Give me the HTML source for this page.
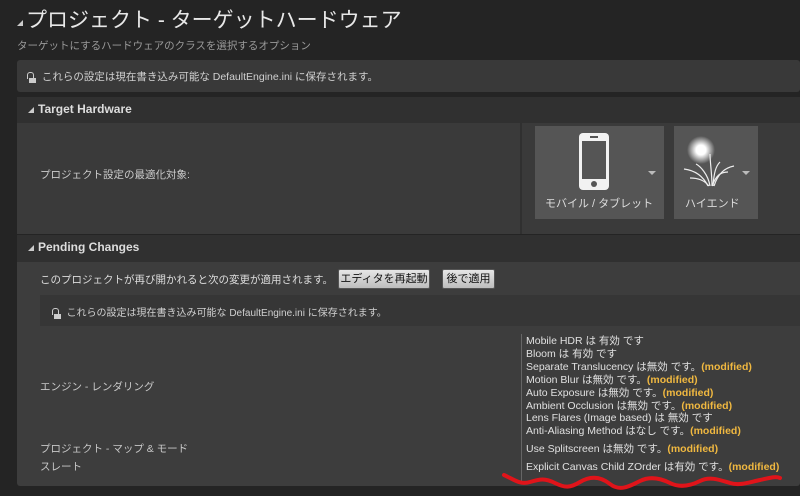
<!DOCTYPE html>
<html><head><meta charset="utf-8"><style>
*{margin:0;padding:0;box-sizing:border-box}
body{width:800px;height:496px;background:#242424;font-family:"Liberation Sans","Noto Sans CJK JP",sans-serif;color:#c8c8c8;position:relative;overflow:hidden;font-size:10.5px}
.a{position:absolute}
.lock{display:inline-block;width:9px;height:11px;position:relative;vertical-align:middle}
.lock:before{content:"";position:absolute;left:0;top:0;width:5px;height:6px;border:1.5px solid #ccc;border-bottom:none;border-radius:3px 3px 0 0}
.lock:after{content:"";position:absolute;left:2px;top:6px;width:7px;height:5px;background:#ccc}
.btn{position:absolute;height:20px;background:linear-gradient(#e6e6e6,#bdbdbd);border:1px solid #555;border-radius:2px;color:#111;font-size:11px;line-height:18px;text-align:center}
.m{color:#f0b840;font-weight:bold}
.tri{display:inline-block;width:0;height:0;border-left:6px solid transparent;border-bottom:6px solid #ccc;margin-right:4px}
.dd{position:absolute;width:0;height:0;border-left:4px solid transparent;border-right:4px solid transparent;border-top:4px solid #bbb}
</style></head><body>
<div class="a" style="left:17px;top:20px;width:0;height:0;border-left:6px solid transparent;border-bottom:6px solid #ccc"></div>
<div class="a" style="left:26px;top:4px;font-size:21px;color:#e8e8e8">プロジェクト - ターゲットハードウェア</div>
<div class="a" style="left:17px;top:38px;font-size:10.5px;color:#9a9a9a">ターゲットにするハードウェアのクラスを選択するオプション</div>
<div class="a" style="left:17px;top:60px;width:783px;height:32px;background:#393939;border-radius:3px"></div>
<div class="a" style="left:27px;top:69px;font-size:10.5px;color:#d0d0d0"><span class="lock"></span>&nbsp; これらの設定は現在書き込み可能な DefaultEngine.ini に保存されます。</div>
<div class="a" style="left:17px;top:97px;width:783px;height:26px;background:#303030"></div>
<div class="a" style="left:28px;top:102px;font-size:12px;font-weight:bold;color:#ddd"><span class="tri"></span>Target Hardware</div>
<div class="a" style="left:17px;top:123px;width:783px;height:111px;background:#3a3a3a"></div>
<div class="a" style="left:520px;top:123px;width:2px;height:111px;background:#303030"></div>
<div class="a" style="left:40px;top:167px;color:#ccc">プロジェクト設定の最適化対象:</div>
<div class="a" style="left:535px;top:126px;width:129px;height:93px;background:#555"></div>
<svg class="a" style="left:578px;top:133px" width="32" height="58"><rect x="1" y="0" width="30" height="57" rx="4" fill="#f2f2f2"/><rect x="4" y="8" width="24" height="38" fill="#555"/><rect x="12" y="3" width="8" height="2" fill="#555"/><circle cx="16" cy="51" r="3" fill="#555"/></svg>
<div class="dd" style="left:648px;top:171px"></div>
<div class="a" style="left:545px;top:195px;font-size:11px;color:#ddd">モバイル / タブレット</div>
<div class="a" style="left:674px;top:126px;width:84px;height:93px;background:#555"></div>
<svg class="a" style="left:682px;top:136px" width="54" height="56"><defs><radialGradient id="g"><stop offset="0" stop-color="#fff"/><stop offset=".35" stop-color="#fff"/><stop offset="1" stop-color="#fff" stop-opacity="0"/></radialGradient></defs><circle cx="19" cy="14" r="14" fill="url(#g)"/><g stroke="#eee" stroke-width="1.2" fill="none"><path d="M26 50 C20 38 10 34 2 33"/><path d="M28 50 C26 38 18 30 14 28"/><path d="M30 50 C30 38 28 26 28 18"/><path d="M32 50 C36 38 42 32 52 30"/><path d="M30 50 C34 40 38 36 46 36"/><path d="M27 50 C22 44 16 42 8 42"/><path d="M31 50 C32 36 34 30 38 26"/></g></svg>
<div class="dd" style="left:742px;top:171px"></div>
<div class="a" style="left:685px;top:195px;font-size:11px;color:#ddd">ハイエンド</div>
<div class="a" style="left:17px;top:235px;width:783px;height:27px;background:#303030"></div>
<div class="a" style="left:28px;top:240px;font-size:12px;font-weight:bold;color:#ddd"><span class="tri"></span>Pending Changes</div>
<div class="a" style="left:17px;top:262px;width:783px;height:224px;background:#3d3d3d;border-radius:0 0 3px 3px"></div>
<div class="a" style="left:40px;top:272px;font-size:10.5px;color:#ddd">このプロジェクトが再び開かれると次の変更が適用されます。</div>
<div class="btn" style="left:338px;top:269px;width:92px">エディタを再起動</div>
<div class="btn" style="left:442px;top:269px;width:53px">後で適用</div>
<div class="a" style="left:40px;top:295px;width:760px;height:31px;background:#363636"></div>
<div class="a" style="left:52px;top:304px;font-size:10px;color:#d0d0d0"><span class="lock"></span>&nbsp; これらの設定は現在書き込み可能な DefaultEngine.ini に保存されます。</div>
<div class="a" style="left:521px;top:334px;width:1px;height:150px;background:#666"></div>
<div class="a" style="left:40px;top:379px">エンジン - レンダリング</div>
<div class="a" style="left:40px;top:441px">プロジェクト - マップ &amp; モード</div>
<div class="a" style="left:40px;top:459px">スレート</div>
<div class="a" style="left:526px;top:335px;font-size:10.5px;line-height:12.9px;color:#e0e0e0">
Mobile HDR は 有効 です<br>Bloom は 有効 です<br>Separate Translucency は無効 です。<span class="m">(modified)</span><br>Motion Blur は無効 です。<span class="m">(modified)</span><br>Auto Exposure は無効 です。<span class="m">(modified)</span><br>Ambient Occlusion は無効 です。<span class="m">(modified)</span><br>Lens Flares (Image based) は 無効 です<br>Anti-Aliasing Method はなし です。<span class="m">(modified)</span></div>
<div class="a" style="left:526px;top:441px;font-size:10.5px;color:#e0e0e0">Use Splitscreen は無効 です。<span class="m">(modified)</span></div>
<div class="a" style="left:526px;top:459px;font-size:10.5px;color:#e0e0e0">Explicit Canvas Child ZOrder は有効 です。<span class="m">(modified)</span></div>
<svg class="a" style="left:500px;top:470px" width="300" height="26"><path d="M4 5 C15 10 20 15 30 12 S45 8 55 13 S70 18 80 12 S100 6 110 14 S130 16 140 11 S160 8 170 13 S190 16 200 11 S220 10 230 13 S250 12 260 10 S275 6 280 8" stroke="#e0141a" stroke-width="4" fill="none" stroke-linecap="round"/></svg>
</body></html>
